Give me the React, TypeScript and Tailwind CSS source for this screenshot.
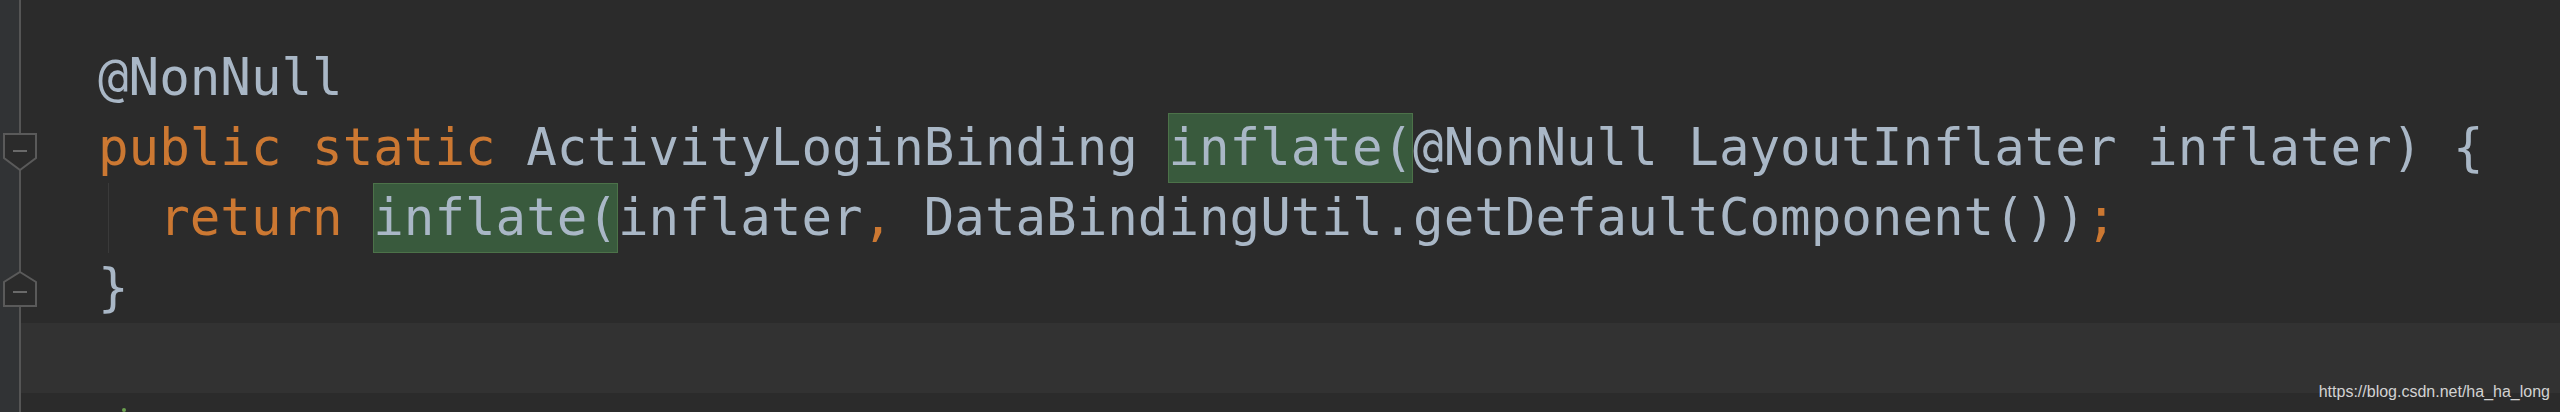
import React from "react";

const Kw = ({ children }: { children: React.ReactNode }) => (
  <span className="text-[#cc7832]">{children}</span>
);

// usage highlight, same box on both lines
const Hl = ({ children }: { children: React.ReactNode }) => (
  <span className="inline-block align-top h-[70px] bg-[#395a3d] shadow-[inset_0_0_0_1px_#4c7249]">
    {children}
  </span>
);

const FoldStart = () => (
  <svg
    className="absolute left-[3px] top-[19px]"
    width="34"
    height="40"
    viewBox="0 0 34 40"
  >
    <path d="M1 2 H33 V26 L17 38 L1 26 Z" fill="#2b2b2b" stroke="#5a5a5a" strokeWidth="2" />
    <path d="M10 19 H24" stroke="#6a6a6a" strokeWidth="2" />
  </svg>
);

const FoldEnd = () => (
  <svg
    className="absolute left-[3px] top-[17px]"
    width="34"
    height="40"
    viewBox="0 0 34 40"
  >
    <path d="M17 2 L33 12 V36 H1 V12 Z" fill="#2b2b2b" stroke="#5a5a5a" strokeWidth="2" />
    <path d="M10 22 H24" stroke="#6a6a6a" strokeWidth="2" />
  </svg>
);

const Row = ({
  children,
  height = "h-[70px]",
  current = false,
  marker,
}: {
  children?: React.ReactNode;
  height?: string;
  current?: boolean;
  marker?: React.ReactNode;
}) => (
  <div className={`relative flex ${height}`}>
    <div className="w-[19px] bg-[#313335]" />
    <div className="w-[2px] bg-[#555555]" />
    <div
      className={`relative flex-1 pl-[77px] leading-[70px] whitespace-pre ${
        current ? "bg-[#323232]" : ""
      }`}
    >
      {children}
    </div>
    {marker}
  </div>
);

export default function App() {
  return (
    <div className="relative w-[2560px] h-[412px] overflow-hidden bg-[#2b2b2b] font-['DejaVu_Sans_Mono',monospace] text-[50.8px] text-[#a9b7c6]">
      <Row height="h-[43px]" />
      <Row>@NonNull</Row>
      <Row marker={<FoldStart />}>
        <Kw>public</Kw> <Kw>static</Kw> ActivityLoginBinding <Hl>inflate(</Hl>
        @NonNull LayoutInflater inflater) {"{"}
      </Row>
      <Row>
        <div className="absolute left-[87px] top-0 h-full w-px bg-[#3a3a3a]" />
        {"  "}
        <Kw>return</Kw> <Hl>inflate(</Hl>inflater<Kw>,</Kw> DataBindingUtil.getDefaultComponent())
        <Kw>;</Kw>
      </Row>
      <Row marker={<FoldEnd />}>{"}"}</Row>
      <Row current />
      <Row>
        <div className="pt-[15px] pl-[24px]">
          <div className="w-[4px] h-[4px] rounded-full bg-[#6a9f4f]" />
        </div>
      </Row>

      <div className="absolute right-[10px] top-[382px] font-['Liberation_Sans',Arial,sans-serif] text-[16px] leading-[20px] text-[#d2d2d2]">
        https://blog.csdn.net/ha_ha_long
      </div>
    </div>
  );
}
